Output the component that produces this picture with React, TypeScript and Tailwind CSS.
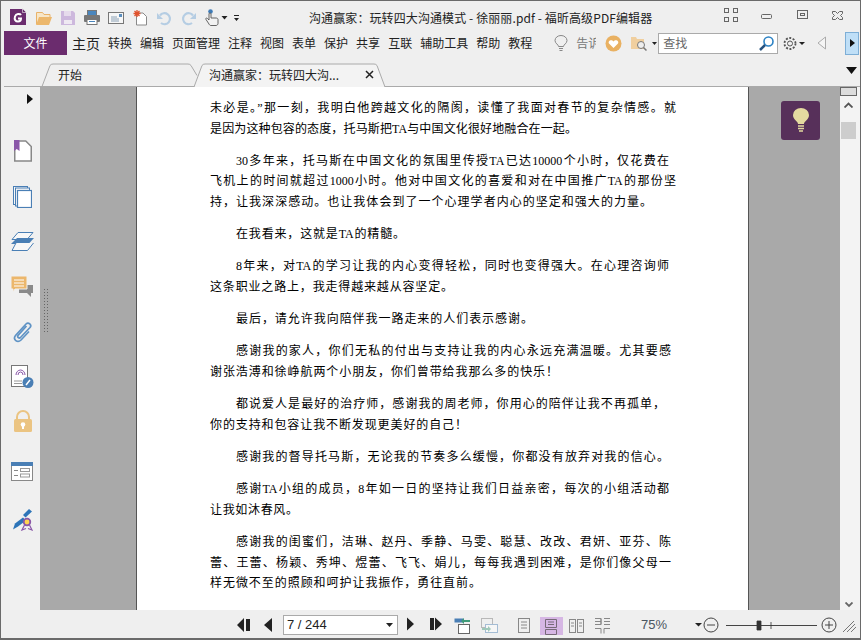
const P: { x: number; e: number; t: string; full?: boolean }[][] = [
  [
    { x: 210, e: 676, t: "未必是。”那一刻，我明白他跨越文化的隔阂，读懂了我面对春节的复杂情感。就" },
    { x: 210, e: 577, t: "是因为这种包容的态度，托马斯把TA与中国文化很好地融合在一起。" },
  ],
  [
    { x: 236, e: 669, t: "30多年来，托马斯在中国文化的氛围里传授TA已达10000个小时，仅花费在" },
    { x: 210, e: 676, t: "飞机上的时间就超过1000小时。他对中国文化的喜爱和对在中国推广TA的那份坚" },
    { x: 210, e: 652, t: "持，让我深深感动。也让我体会到了一个心理学者内心的坚定和强大的力量。" },
  ],
  [{ x: 236, e: 405, t: "在我看来，这就是TA的精髓。" }],
  [
    { x: 236, e: 669, t: "8年来，对TA的学习让我的内心变得轻松，同时也变得强大。在心理咨询师" },
    { x: 210, e: 453, t: "这条职业之路上，我走得越来越从容坚定。" },
  ],
  [{ x: 236, e: 533, t: "最后，请允许我向陪伴我一路走来的人们表示感谢。" }],
  [
    { x: 236, e: 671, t: "感谢我的家人，你们无私的付出与支持让我的内心永远充满温暖。尤其要感" },
    { x: 210, e: 558, t: "谢张浩溥和徐峥航两个小朋友，你们曾带给我那么多的快乐！" },
  ],
  [
    { x: 236, e: 665, t: "都说爱人是最好的治疗师，感谢我的周老师，你用心的陪伴让我不再孤单，" },
    { x: 210, e: 467, t: "你的支持和包容让我不断发现更美好的自己！" },
  ],
  [{ x: 236, e: 669, t: "感谢我的督导托马斯，无论我的节奏多么缓慢，你都没有放弃对我的信心。" }],
  [
    { x: 236, e: 669, t: "感谢TA小组的成员，8年如一日的坚持让我们日益亲密，每次的小组活动都" },
    { x: 210, e: 298, t: "让我如沐春风。" },
  ],
  [
    { x: 236, e: 671, t: "感谢我的闺蜜们，洁琳、赵丹、季静、马雯、聪慧、改改、君妍、亚芬、陈" },
    { x: 210, e: 671, t: "蕾、王蕾、杨颖、秀坤、煜蕾、飞飞、娟儿，每每我遇到困难，是你们像父母一" },
    { x: 210, e: 481, t: "样无微不至的照顾和呵护让我振作，勇往直前。" },
  ],
];

function Top() {
  return (
    <div className="flex h-[30px] items-center relative">
      <svg width="250" height="30" viewBox="1 1 250 30" className="shrink-0">
        {/* logo */}
        <path d="M10 9h12l4 4v12H10z" fill="#6b2c6e" />
        <path d="M22.500 8.500l4 4h-4z" fill="#6b2c6e" stroke="#efefef" strokeWidth=".6" />
        <path d="M21 15c-1-1.500-5-1.500-6 1.500s.5 5 3 5c2 0 3-1 3-3h-3" fill="none" stroke="#fff" strokeWidth="2" />
        {/* folder */}
        <path d="M36.500 24V12.500h6l1.500 2h6V17" fill="#f7e6c8" stroke="#e9b268" />
        <path d="M36 25l3-8h13l-3 8z" fill="#ecb76c" />
        {/* save */}
        <path d="M61 11h12l2 2v12H61z" fill="#cdb8dd" />
        <rect x="64" y="11" width="7" height="5" fill="#e6dbec" />
        <rect x="64" y="20" width="8" height="4" fill="#efe9f2" />
        {/* print */}
        <rect x="87.500" y="10.500" width="9" height="5" fill="#4a86bd" stroke="#777" />
        <rect x="84" y="15" width="16" height="7" rx="1" fill="#777" />
        <rect x="87" y="19.500" width="10" height="5" fill="#fff" stroke="#777" />
        <path d="M89 21.500h6" stroke="#4a86bd" />
        {/* mail */}
        <rect x="108.500" y="12.500" width="15" height="11" fill="#f7f7f7" stroke="#777" />
        <path d="M111 17h6M111 19h8M111 21h8" stroke="#8aa0b5" />
        <rect x="119" y="14" width="3" height="3" fill="#5a8dbd" />
        {/* new */}
        <path d="M138 13h5l3.500 3.500v8.500h-10V14" fill="#fff" stroke="#8a8a8a" />
        <path d="M137 10v7M133.500 13.500h7M134.500 11l5 5M139.500 11l-5 5" stroke="#e0522c" strokeWidth="1.300" />
        {/* undo */}
        <path d="M160 15.500a5.500 5.500 0 1 1 1 7.500" fill="none" stroke="#b5cde3" strokeWidth="2.200" />
        <path d="M157 13v6h6z" fill="#b5cde3" />
        {/* redo */}
        <path d="M193 15.500a5.500 5.500 0 1 0 -1 7.500" fill="none" stroke="#b5cde3" strokeWidth="2.200" />
        <path d="M196 13v6h-6z" fill="#b5cde3" />
        {/* hand */}
        <circle cx="210.500" cy="11.500" r="2.300" fill="#3f7cb8" />
        <path d="M209 14v6l-1.500-1.500c-1-1-2.500 0-1.500 1l3 4.500c.5 1 1 1.500 2 1.500h5c1 0 2-1 2-2v-4c0-1-1-1.500-2-1.500h-5v-4c0-1.500-2-1.500-2 0z" fill="#f2f2f2" stroke="#555" strokeWidth=".9" />
        <path d="M221.500 16h6l-3 3.500z" fill="#222" />
        <path d="M234 15h5v1h-5zM234 18h5l-2.500 3z" fill="#222" />
      </svg>
      <div className="absolute left-[308px] top-[8px] text-[12px] leading-[18px] text-[#222] whitespace-nowrap tracking-[0.1px]">沟通赢家：玩转四大沟通模式 - 徐丽丽.pdf - 福昕高级PDF编辑器</div>
      <svg width="140" height="30" viewBox="0 1 140 30" className="ml-auto shrink-0">
        <g fill="none" stroke="#666" strokeWidth="1">
          <rect x="4.500" y="8.500" width="4" height="4" /><rect x="13.500" y="8.500" width="4" height="4" />
          <rect x="4.500" y="17.500" width="4" height="4" /><rect x="13.500" y="17.500" width="4" height="4" />
          <rect x="41.500" y="14.500" width="10" height="4" rx="1" />
          <rect x="77.500" y="10.500" width="10" height="8" /><rect x="80.500" y="13.500" width="4" height="2" />
          <path d="M112.500 11.500h3l2 2 2-2h3v2l-2 2 2 2v2h-3l-2-2-2 2h-3v-2l2-2-2-2z" />
        </g>
      </svg>
    </div>
  );
}

function Menu() {
  const items = ["转换", "编辑", "页面管理", "注释", "视图", "表单", "保护", "共享", "互联", "辅助工具", "帮助", "教程"];
  return (
    <div className="flex h-[24px] items-center">
      <div className="ml-[3px] w-[63px] h-[24px] bg-[#6b2c6e] text-white text-[12px] flex items-center justify-center">文件</div>
      <div className="ml-[5px] text-[14px] text-[#222] w-[36px]">主页</div>
      <div className="flex gap-2 text-[12px] text-[#222]">
        {items.map((m) => <span key={m} className="whitespace-nowrap">{m}</span>)}
      </div>
      <div className="ml-[22px] flex items-center">
        <svg width="14" height="17" viewBox="0 0 14 17" fill="none" stroke="#888"><path d="M4.500 11.500c0-2-3.500-3-3.500-6a6 5 0 0 1 12 0c0 3-3.500 4-3.500 6z" /><path d="M5 13.500h4M5.500 15.500h3" /></svg>
        <div className="ml-[8px] w-[20px] overflow-hidden text-[12px] text-[#777] whitespace-nowrap">告诉我</div>
        <svg className="ml-[9px]" width="17" height="17" viewBox="0 0 17 17"><circle cx="8.500" cy="8.500" r="8" fill="#e9b162" /><path d="M8.500 13L4 8.500C2.500 6 6.500 3.500 8.500 6.500 10.500 3.500 14.500 6 13 8.500z" fill="#fff" /></svg>
        <svg className="ml-[8px]" width="27" height="17" viewBox="0 0 27 17">
          <path d="M1 2h5l1 2h7v10H1z" fill="#f0cf9f" />
          <circle cx="11" cy="10" r="3.500" fill="#eee" stroke="#777" /><path d="M13.500 12.500l3 3" stroke="#777" strokeWidth="1.500" />
          <path d="M22 7h5l-2.500 3z" fill="#222" />
        </svg>
        <div className="ml-[1px] w-[120px] h-[21px] bg-white border border-[#aaa] flex items-center justify-between px-[4px] text-[12px] text-[#666]">
          <span>查找</span>
          <svg width="17" height="17" viewBox="0 0 17 17" className="-mr-[2px]"><circle cx="10.500" cy="6.500" r="4.500" fill="#fff" stroke="#2c82c4" strokeWidth="1.600" /><path d="M7 10l-5 5" stroke="#25527f" strokeWidth="2.500" /></svg>
        </div>
        <svg className="ml-[5px]" width="22" height="15" viewBox="0 0 22 15" fill="none">
          <circle cx="7" cy="7.500" r="2.500" stroke="#555" />
          <circle cx="7" cy="7.500" r="5.500" stroke="#555" strokeWidth="1.800" strokeDasharray="2 1.500" />
          <path d="M16 6h6l-3 3z" fill="#222" />
        </svg>
        <svg className="ml-[12px]" width="9" height="14" viewBox="0 0 9 14"><path d="M8.500 1v12L1 7z" fill="#f5f5f5" stroke="#aaa" /></svg>
        <div className="ml-[19px] w-[14px] h-[23px] bg-[#bfdff7] border border-[#7daed6] flex items-center justify-center">
          <svg width="5" height="8" viewBox="0 0 5 8"><path d="M0 0l5 4-5 4z" fill="#111" /></svg>
        </div>
      </div>
    </div>
  );
}

function Tabs() {
  return (
    <div className="relative h-[32px] ml-[3px] border-b border-[#aaa]">
      <div className="absolute left-[37px] top-[7px] w-[160px] h-[25px]">
        <svg className="absolute inset-0" width="160" height="25" viewBox="0 0 160 25"><path d="M1 24.500l8-21q1-1.500 3-1.500h135q2 0 3 1.500l6 10" fill="none" stroke="#aaa" /></svg>
        <span className="absolute left-[17px] top-[4px] text-[12px] text-[#222] leading-[18px]">开始</span>
      </div>
      <div className="absolute left-[189px] top-[7px] w-[196px] h-[25px]">
        <svg className="absolute inset-0" width="196" height="25" viewBox="0 0 196 25"><path d="M1 25l8-21.500q1-1.500 3-1.500h169q2 0 3 1.500l8 21.500" fill="#f3f3f3" stroke="#aaa" /></svg>
        <span className="absolute left-[16px] top-[4px] text-[12px] text-[#222] leading-[18px] whitespace-nowrap">沟通赢家：玩转四大沟...</span>
        <svg className="absolute left-[172px] top-[8px]" width="9" height="9" viewBox="0 0 9 9"><path d="M1 1l7 7M8 1L1 8" stroke="#222" strokeWidth="1.500" /></svg>
      </div>
      <svg className="absolute left-[842px] top-[12px]" width="11" height="7" viewBox="0 0 11 7"><path d="M0 0h11L5.500 7z" fill="#111" /></svg>
    </div>
  );
}

function SideIcons() {
  return (
    <div className="flex flex-col items-start w-[39px] shrink-0 bg-[#f0f0f0] relative">
      <svg className="absolute left-[26px] top-[7px]" width="6" height="10" viewBox="0 0 6 10"><path d="M0 0l6 5-6 5z" fill="#111" /></svg>
      <svg className="ml-[13px] mt-[53px] shrink-0" width="18" height="22" viewBox="0 0 18 22"><path d="M.75 1h11l5.500 5.500V21H.75z" fill="#fff" stroke="#888" strokeWidth="1.500" /><path d="M0 0h5.500v11L2.750 9 0 11z" fill="#8a57a8" /></svg>
      <svg className="ml-[12px] mt-[24px] shrink-0" width="19" height="22" viewBox="0 0 19 22"><rect x=".5" y=".5" width="14" height="18" fill="#f8f8f8" stroke="#4a7fb5" /><rect x="2.500" y="2" width="14" height="18" fill="#f8f8f8" stroke="#4a7fb5" /><rect x="4.500" y="4.500" width="14" height="17" fill="#fff" stroke="#4a7fb5" strokeWidth="1.200" /></svg>
      <svg className="ml-[10px] mt-[24px] shrink-0" width="23" height="19" viewBox="0 0 23 19"><path d="M7 .5h15l-6 7H1z" fill="#f8f8f8" stroke="#4a7fb5" /><path d="M6 6h17l-5 5.500-.5.500H0z" fill="#4a7fb5" /><path d="M5 11l-4 7.500h15.500l6-7.500" fill="#f8f8f8" stroke="#4a7fb5" /></svg>
      <svg className="ml-[10px] mt-[25px] shrink-0" width="22" height="22" viewBox="0 0 22 22"><path d="M8 9h14v8h-2v4l-4-4H8z" fill="#8a8a8a" /><path d="M0 0h16v13H4l-2 3v-3H0z" fill="#ecb76c" stroke="#f0f0f0" /><path d="M3 4h10M3 7h10M3 10h10" stroke="#fff" /></svg>
      <svg className="ml-[12px] mt-[23px] shrink-0" width="20" height="22" viewBox="0 0 20 22" fill="none" stroke="#5f93c5" strokeWidth="1.700"><path d="M13.500 5L5 14.500c-1 1.500 1 3.300 2.500 2L17 6.500c2.200-2.500-1.500-6-4-3.500L2.500 14.500c-3 4 2 8 5.500 4.500l8-8.500" /></svg>
      <svg className="ml-[10px] mt-[22px] shrink-0" width="23" height="23" viewBox="0 0 23 23"><rect x=".5" y=".5" width="16" height="21" fill="#fff" stroke="#777" /><path d="M3 16h8M3 18.500h8" stroke="#999" /><path d="M5 10a4.500 5 0 0 1 9 0M7 10a2.500 3 0 0 1 5 0" fill="none" stroke="#8a57a8" /><circle cx="17" cy="17.500" r="5.500" fill="#4a7fb5" /><path d="M15 20l4-5" stroke="#fff" strokeWidth="1.500" /></svg>
      <svg className="ml-[12px] mt-[22px] shrink-0" width="20" height="23" viewBox="0 0 20 23"><path d="M4 10V7a6 6 0 0 1 12 0v3" fill="none" stroke="#ebc482" strokeWidth="2" /><rect x="1" y="9" width="18" height="13" rx="1.500" fill="#ebc482" /><circle cx="10" cy="14.500" r="2.300" fill="#fff" /><rect x="9" y="15" width="2" height="4" fill="#fff" /></svg>
      <svg className="ml-[10px] mt-[29px] shrink-0" width="22" height="19" viewBox="0 0 22 19"><rect x=".5" y=".5" width="21" height="18" fill="#fff" stroke="#888" /><rect x="0" y="0" width="22" height="4" fill="#4a7fb5" /><path d="M3 8.500h4M3 13.500h4" stroke="#888" /><rect x="9.500" y="6.500" width="9" height="3" fill="none" stroke="#999" /><rect x="9.500" y="12" width="9" height="3" fill="none" stroke="#999" /></svg>
      <svg className="ml-[11px] mt-[27px] shrink-0" width="21" height="23" viewBox="0 0 21 23"><path d="M1 21.500l2-6 8-6 3 3-8 6z" fill="#2c74b8" /><path d="M11 7l6-6 3 2.500-6.500 6z" fill="#2c74b8" /><circle cx="15" cy="14" r="3.300" fill="#ffd54f" stroke="#8a57a8" strokeWidth="1.800" /><path d="M12.500 17l-2.500 5 4-1.500M17.500 17l2.500 5-4-1.500" fill="none" stroke="#8a57a8" strokeWidth="1.200" /></svg>
    </div>
  );
}

function Page() {
  return (
    <div className="w-[613px] h-full ml-[96px] bg-white border-x border-[#555] overflow-hidden shrink-0 pl-[73px] pt-[11px]" style={{ fontFamily: '"Liberation Serif","Noto Sans CJK SC",serif' }}>
      <div className="text-[12px] leading-[20.500px] text-[#000]">
        {P.map((p, i) => (
          <div key={i} className={i ? "mt-[11.800px]" : ""}>
            {p.map((l, j) => (
              <div key={j} className="[text-align:justify] [text-align-last:justify] whitespace-nowrap" style={{ width: l.e - l.x, marginLeft: l.x - 210 }}>{l.t}</div>
            ))}
          </div>
        ))}
      </div>
    </div>
  );
}

function Scrollbar() {
  return (
    <div className="w-[20px] shrink-0 bg-[#f3f3f3] flex flex-col items-start">
      <div className="w-[17px] h-[9px] bg-[#dcdcdc] border border-[#666]" />
      <svg className="ml-[4px] mt-[6px]" width="9" height="6" viewBox="0 0 9 6"><path d="M.5 5.500l4-4 4 4" fill="none" stroke="#555" strokeWidth="1.800" /></svg>
      <div className="ml-[1px] mt-[14px] w-[15px] h-[17px] bg-[#cdcdcd]" />
      <svg className="ml-[5px] mt-auto mb-[2px]" width="8" height="6" viewBox="0 0 8 6"><path d="M.5.500l3.500 3.500 3.500-3.500" fill="none" stroke="#666" strokeWidth="1.800" /></svg>
    </div>
  );
}

function Status() {
  return (
    <div className="relative h-[28px] flex items-center text-[#333]">
      <svg className="absolute left-[235px] top-[7px]" width="40" height="16" viewBox="0 0 40 16"><path d="M8 1v14L1 8zM10 2h4v12h-4zM36 1v14l-8-7z" fill="#222" /></svg>
      <div className="absolute left-[282px] top-[5px] w-[115px] h-[20px] bg-white border border-[#aaa] text-[13px] leading-[18px] pl-[3px] text-[#222]" style={{ fontFamily: '"Liberation Sans",sans-serif' }}>7 / 244
        <svg className="absolute right-[4px] top-[7px]" width="7" height="4" viewBox="0 0 7 4"><path d="M0 0h7L3.500 4z" fill="#222" /></svg>
      </div>
      <svg className="absolute left-[404px] top-[6px]" width="100" height="19" viewBox="0 0 100 19">
        <path d="M2 1.500l7 6.500-7 6.500zM25 2v12h4V2zM30 1.500l7 6.500-7 6.500z" fill="#222" />
        <rect x="49.500" y="2.500" width="9" height="4" fill="#4a7fb5" /><rect x="53.500" y="8.500" width="11" height="9" fill="#fff" stroke="#666" /><path d="M59 5h6" stroke="#3f9a78" strokeWidth="2" /><path d="M59 2v6l-3-3z" fill="#3f9a78" />
        <g opacity=".45"><rect x="76.500" y="2.500" width="11" height="9" fill="none" stroke="#777" /><rect x="80.500" y="8.500" width="12" height="8" fill="#fff" stroke="#4a7fb5" /><path d="M77 13h6" stroke="#3f9a78" strokeWidth="2" /><path d="M83 10v6l3-3z" fill="#3f9a78" /></g>
      </svg>
      <div className="absolute left-[539px] top-[7px] w-[23px] h-[18px] bg-[#d6b7e4]" />
      <svg className="absolute left-[514px] top-[7px]" width="100" height="20" viewBox="0 0 100 20" fill="none" stroke="#888">
        <rect x="3.500" y="1.500" width="11" height="14" /><path d="M6 5h6M6 8h6M6 11h6" />
        <path d="M30.500 2.500h11v8h-11zM30.500 12.500h11v5h-11zM33 5h6M33 7.500h6" stroke="#776a78" />
        <rect x="54.500" y="2.500" width="6" height="13" /><rect x="62.500" y="2.500" width="6" height="13" /><path d="M56 6h3M56 9h3M64 6h3M64 9h3" />
        <path d="M80 1.500h6v6h-6M89 1.500h6M89 4.500h6M89 7.500h6M86 1.500v6M80 11.500h6v5M89 11.500h6M89 11.500v5M80 4.500h6" />
      </svg>
      <span className="absolute left-[640px] top-[6px] text-[13px] leading-[18px] text-[#4a5560]" style={{ fontFamily: '"Liberation Sans",sans-serif' }}>75%</span>
      <svg className="absolute left-[694px] top-[6px]" width="166" height="20" viewBox="0 0 166 20">
        <path d="M0 7h7l-3.500 3.500z" fill="#222" />
        <circle cx="16" cy="9" r="7" fill="none" stroke="#444" /><path d="M12 9h8" stroke="#444" />
        <path d="M31 9.500h91" stroke="#444" /><path d="M62 5h4v9h-4zM76 6v7" fill="#333" stroke="#333" strokeWidth=".8" />
        <circle cx="134" cy="9" r="7" fill="none" stroke="#444" /><path d="M130 9h8M134 5v8" stroke="#444" />
        <path d="M148 16l11-11M152 16l8-8M156 16l5-5" stroke="#777" />
      </svg>
    </div>
  );
}

export default function App() {
  return (
    <div className="w-[861px] h-[640px] bg-[#efefef] border border-[#6a6a6a] border-b-[2px] flex flex-col overflow-hidden" style={{ fontFamily: '"Noto Sans CJK SC","Noto Sans",sans-serif' }}>
      <Top />
      <Menu />
      <Tabs />
      <div className="flex flex-1 min-h-0">
        <SideIcons />
        <div className="relative flex-1 bg-[#a9a9a9] min-w-0 flex">
          <Page />
          <div className="absolute left-[741px] top-[14px] w-[39px] h-[39px] bg-[#57305a] rounded-[3px] flex items-center justify-center">
            <svg width="16" height="25" viewBox="0 0 16 25"><path d="M5 16c0-3-5-4-5-9a8 7 0 0 1 16 0c0 5-5 6-5 9z" fill="#e4daa0" /><path d="M5 18h6M5 20.500h6M6 23h4" stroke="#e4daa0" strokeWidth="1.500" /></svg>
          </div>
          <div className="absolute left-[3px] top-[201px] w-[6px] h-[44px] [background-image:radial-gradient(#666_40%,transparent_45%)] [background-size:3px_3px]" />
        </div>
        <Scrollbar />
      </div>
      <Status />
    </div>
  );
}
